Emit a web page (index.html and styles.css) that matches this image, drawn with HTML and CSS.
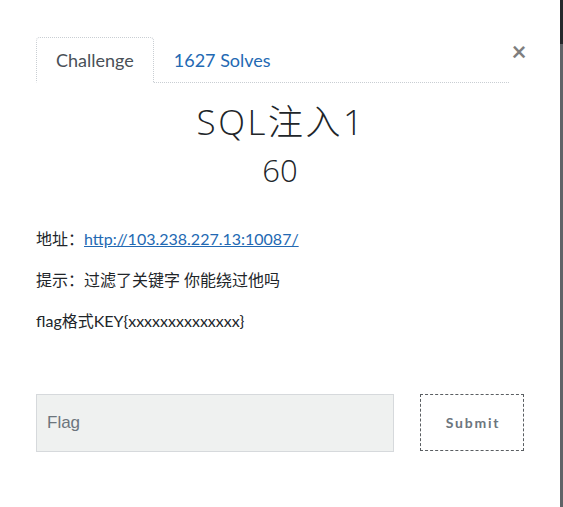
FILE: index.html
```html
<!DOCTYPE html>
<html lang="zh">
<head>
<meta charset="utf-8">
<title>SQL注入1</title>
<link rel="stylesheet" href="styles.css">
</head>
<body>
<div class="page">
  <div class="modal">
    <div class="header">
      <nav class="tabs">
        <span class="tab active">Challenge</span>
        <a class="tab link" href="#">1627 Solves</a>
      </nav>
      <span class="close">&times;</span>
    </div>
    <h2 class="title">SQL注入1</h2>
    <h3 class="points">60</h3>
    <div class="desc">
      <p>地址：<a href="#" class="url">http://103.238.227.13:10087/</a></p>
      <p>提示：过滤了关键字 你能绕过他吗</p>
      <p>flag格式KEY{xxxxxxxxxxxxxx}</p>
    </div>
    <form class="submit-row">
      <input class="flag" type="text" placeholder="Flag">
      <button class="btn" type="button">Submit</button>
    </form>
  </div>
  <div class="backdrop"><div class="bar-top"></div></div>
</div>
</body>
</html>
```

FILE: styles.css
```css
html, body {
  margin: 0;
  padding: 0;
  height: 100%;
  background: #fff;
}
.page {
  display: flex;
  height: 507px;
  font-family: "Lato", "Noto Sans CJK SC", sans-serif;
  color: #212529;
}
.modal {
  width: 560px;
  background: #fff;
  padding: 37px 36px 0 36px;
  box-sizing: border-box;
}
.backdrop {
  flex: 1;
  background: #5f6367;
  display: flex;
  flex-direction: column;
}
.bar-top {
  height: 44px;
  background: #24282b;
}
.header {
  display: flex;
  align-items: flex-start;
}
.tabs {
  display: flex;
  width: 473px;
  border-bottom: 1px dotted #c9ced3;
  height: 45px;
}
.tab {
  display: flex;
  align-items: center;
  padding: 0 19px;
  font-size: 18px;
  height: 45px;
  box-sizing: border-box;
  text-decoration: none;
}
.tab.active {
  color: #495057;
  border: 1px dotted #c9ced3;
  border-bottom: 1px solid #fff;
  border-radius: 4px 4px 0 0;
  background: #fff;
  height: 46px;
}
.tab.link {
  color: #2369b3;
  padding-left: 20px;
}
.close {
  margin-left: auto;
  width: 20px;
  font-family: "Lato", sans-serif;
  font-weight: 700;
  font-size: 26px;
  line-height: 1;
  color: #000;
  opacity: 0.5;
  text-align: center;
  margin-top: 1px;
  margin-right: -5px;
}
.title {
  margin: 18px 0 0 2px;
  text-align: center;
  font-family: "Open Sans", "Noto Sans CJK SC", sans-serif;
  font-weight: 300;
  font-size: 35px;
  line-height: 1.2;
  letter-spacing: 2.5px;
  color: #212529;
}
.points {
  margin: 9px 0 0;
  text-align: center;
  font-family: "Open Sans", sans-serif;
  font-weight: 300;
  font-size: 31px;
  line-height: 1.2;
  color: #212529;
}
.desc {
  margin-top: 38px;
  font-size: 16px;
  color: #212529;
}
.desc p {
  margin: 0 0 17px;
  line-height: 24px;
}
.url {
  color: #2369b3;
  text-decoration: underline;
}
.submit-row {
  display: flex;
  margin-top: 61px;
  gap: 26px;
  align-items: flex-start;
}
.flag {
  width: 358px;
  height: 58px;
  box-sizing: border-box;
  background: #eff1f0;
  border: 1px solid #d6d9dc;
  padding: 0 10px;
  font-family: "Liberation Sans", sans-serif;
  font-size: 17px;
  color: #495057;
  outline: none;
}
.flag::placeholder {
  color: #6c757d;
}
.btn {
  width: 104px;
  height: 57px;
  box-sizing: border-box;
  background: #fff;
  border: 1px dashed #5a5e62;
  font-family: "Lato", sans-serif;
  font-weight: 700;
  font-size: 14px;
  letter-spacing: 1.8px;
  color: #6c757d;
  padding: 0 0 0 2px;
}
```
